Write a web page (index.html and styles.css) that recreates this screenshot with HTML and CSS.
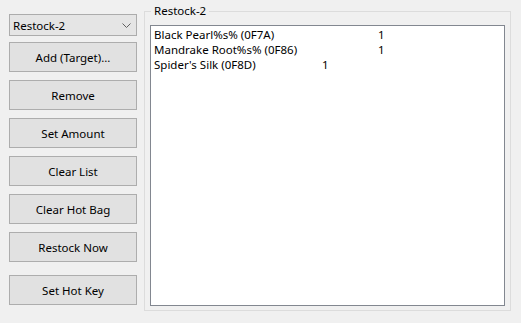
FILE: index.html
```html
<!DOCTYPE html>
<html lang="en">
<head>
  <meta charset="UTF-8">
  <title>Restock</title>
  <link rel="stylesheet" href="styles.css">
</head>
<body>
  <div class="window">
    <div class="side">
      <div class="combo">
        <span>Restock-2</span>
        <svg class="chevron" viewBox="0 0 9 5"><path d="M0.5 0.5L4.5 4.5L8.5 0.5"/></svg>
      </div>
      <button class="btn">Add (Target)...</button>
      <button class="btn">Remove</button>
      <button class="btn">Set Amount</button>
      <button class="btn">Clear List</button>
      <button class="btn">Clear Hot Bag</button>
      <button class="btn">Restock Now</button>
      <button class="btn btn-hotkey">Set Hot Key</button>
    </div>

    <fieldset class="group">
      <legend>Restock-2</legend>
      <div class="list">
        <div class="row">Black Pearl%s% (0F7A)		1</div>
        <div class="row">Mandrake Root%s% (0F86)		1</div>
        <div class="row">Spider's Silk (0F8D)		1</div>
      </div>
    </fieldset>
  </div>
</body>
</html>
```

FILE: styles.css
```css
body {
  margin: 0;
  background: #f0f0f0;
  font-family: "Noto Sans", "Open Sans", sans-serif;
  font-size: 11.5px;
  color: #000;
}

.window {
  display: flex;
  align-items: flex-start;
  padding: 0 10px 0 9px;
  gap: 7px;
}

.side {
  width: 128px;
  display: flex;
  flex-direction: column;
  gap: 8px;
  padding-top: 14px;
}

.combo {
  height: 22px;
  box-sizing: border-box;
  border: 1px solid #acacac;
  background: #e5e5e5;
  display: flex;
  align-items: center;
  justify-content: space-between;
  padding: 0 5px 0 3px;
  margin-bottom: -2px;
}
.chevron { width: 9px; height: 5px; fill: none; stroke: #606060; stroke-width: 1; }

.btn {
  height: 30px;
  box-sizing: border-box;
  border: 1px solid #adadad;
  background: #e1e1e1;
  font: inherit;
  color: #000;
  padding: 0;
}
.btn-hotkey { margin-top: 5px; }

.group {
  flex: 1;
  margin: 3px 0 0 0;
  padding: 0 5px 4px 5px;
  border: 1px solid #dcdcdc;
  min-width: 0;
}
.group legend {
  padding: 0 3px;
  margin-left: 1px;
  line-height: 16px;
}

.list {
  margin-top: 6px;
  height: 281px;
  box-sizing: border-box;
  border: 1px solid #828790;
  background: #fff;
  padding: 1px 3px;
}
.row {
  line-height: 15px;
  white-space: pre;
  tab-size: 56px;
}
```
